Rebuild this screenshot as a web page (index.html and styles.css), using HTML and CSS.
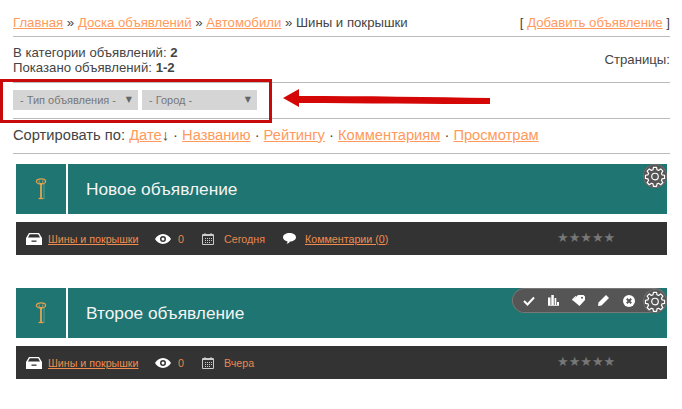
FILE: index.html
```html
<!DOCTYPE html>
<html lang="ru">
<head>
    <meta charset="UTF-8">
    <meta name="viewport" content="width=device-width, initial-scale=1.0">
    <title>Шины и покрышки</title>
    <link rel="stylesheet" href="styles.css">
</head>
<body>
    <svg class="defs" width="0" height="0">
        <symbol id="i-key" viewBox="0 0 12 23">
            <ellipse cx="6" cy="3.400" rx="4.600" ry="2.600" fill="none" stroke="#e0a050" stroke-width="1.300"/>
            <path d="M4.200 2.500v3.500M7.800 2.500v3.500" stroke="#e0a050" stroke-width=".8"/>
            <path d="M6 5v16" stroke="#eaaa58" stroke-width="1.700"/>
            <path d="M3.500 20.500h5" stroke="#e0a050" stroke-width="1.300"/>
            <path d="M9 6v15" stroke="#5f9a85" stroke-width="1"/>
        </symbol>
        <symbol id="i-gear" viewBox="0 0 24 24">
            <path fill="none" stroke="#fff" stroke-width="1.300" stroke-linejoin="round" d="M10.300 2.500h3.400l.5 2.700 1.700.7 2.300-1.600 2.400 2.400-1.600 2.300.7 1.700 2.700.5v3.400l-2.700.5-.7 1.700 1.600 2.300-2.400 2.400-2.300-1.600-1.700.7-.5 2.700h-3.400l-.5-2.700-1.700-.7-2.300 1.600-2.400-2.400 1.600-2.300-.7-1.700-2.700-.5v-3.400l2.700-.5.7-1.700-1.600-2.300 2.400-2.400 2.300 1.600 1.700-.7z"/>
            <circle cx="12" cy="12.600" r="3.600" fill="none" stroke="#fff" stroke-width="1.300"/>
        </symbol>
        <symbol id="i-tray" viewBox="0 0 16 12">
            <path fill="#fff" d="M3 0h10l3 5V12H0V5zM3.800 1.300 2 4.500h12l-1.800-3.200z"/>
            <path fill="#333" d="M5.500 7.500h5v1.300h-5z"/>
        </symbol>
        <symbol id="i-eye" viewBox="0 0 16 10">
            <path fill="#fff" fill-rule="evenodd" d="M8 0c3.500 0 6.300 2.200 8 5-1.700 2.800-4.500 5-8 5S1.700 7.800 0 5c1.700-2.800 4.500-5 8-5zm0 2a3 3 0 1 0 0 6 3 3 0 0 0 0-6z"/>
            <circle cx="8" cy="5" r="1.500" fill="#fff"/>
        </symbol>
        <symbol id="i-cal" viewBox="0 0 12 12">
            <path fill="none" stroke="#ccc" d="M.5 1.500h11v10H.5z"/>
            <path fill="#ccc" d="M1 1h10v2H1zM2.500 0h1v2h-1zM8.500 0h1v2h-1zM3 5h1v1H3zM5 5h1v1H5zM7 5h1v1H7zM9 5h1v1H9zM3 7h1v1H3zM5 7h1v1H5zM7 7h1v1H7zM9 7h1v1H9zM3 9h1v1H3zM5 9h1v1H5zM7 9h1v1H7z"/>
        </symbol>
        <symbol id="i-bubble" viewBox="0 0 13 11">
            <path fill="#fff" d="M6.500 0C10 0 13 1.800 13 4.300S10 8.600 7 8.600c-.5 1-1.800 2-3.500 2.400.6-.7 1-1.600 1-2.600C2 8 0 6.500 0 4.300 0 1.800 3 0 6.500 0z"/>
        </symbol>
        <symbol id="i-check" viewBox="0 0 12 10">
            <path fill="none" stroke="#fff" stroke-width="2" d="M1 5l3.500 3.500L11 1.500"/>
        </symbol>
        <symbol id="i-bars" viewBox="0 0 11 11">
            <path fill="#fff" d="M0 2.500h2.500V10H0zM3.300 0h2.500v10H3.300zM6.600 3h1.700v7H6.600zM9 7h2v3H9zM0 10.300h11v.7H0z"/>
        </symbol>
        <symbol id="i-tag" viewBox="0 0 13 11">
            <path fill="#fff" fill-rule="evenodd" d="M6 0h5.500L13 1.500V5L7.500 11 1 5.500zM10 1.800a1 1 0 1 0 0 2 1 1 0 0 0 0-2z"/>
            <path fill="#fff" d="M3.500 1 0 4.500 1 6l3.500-4.500z"/>
        </symbol>
        <symbol id="i-pencil" viewBox="0 0 11 11">
            <path fill="#fff" d="M8 0l3 3-7.500 7.500L0 11l.5-3.500z"/>
        </symbol>
        <symbol id="i-close" viewBox="0 0 12 12">
            <circle cx="6" cy="6" r="6" fill="#fff"/>
            <path stroke="#555" stroke-width="2" d="M3.800 3.800l4.400 4.400M8.200 3.800 3.800 8.200"/>
        </symbol>
    </svg>

    <div class="page">
        <div class="crumbs">
            <div>
                <a href="#">Главная</a> » <a href="#">Доска объявлений</a> » <a href="#">Автомобили</a> » Шины и покрышки
            </div>
            <div>[ <a href="#">Добавить объявление</a> ]</div>
        </div>

        <div class="info">
            <div>
                В категории объявлений: <b>2</b><br>
                Показано объявлений: <b>1-2</b>
            </div>
            <div class="pages">Страницы:</div>
        </div>

        <div class="filters">
            <div class="select type"><span>- Тип объявления -</span><span class="caret">▼</span></div>
            <div class="select city"><span>- Город -</span><span class="caret">▼</span></div>
        </div>

        <div class="sort">
            Сортировать по: <a href="#">Дате</a>↓ · <a href="#">Названию</a> · <a href="#">Рейтингу</a> · <a href="#">Комментариям</a> · <a href="#">Просмотрам</a>
        </div>

        <div class="ad">
            <div class="ad-head">
                <div class="ad-key"><svg width="12" height="23"><use href="#i-key"/></svg></div>
                <h2 class="ad-title">Новое объявление</h2>
                <div class="tools">
                    <span class="gear"><svg width="22" height="22"><use href="#i-gear"/></svg></span>
                </div>
            </div>
            <div class="ad-meta">
                <svg class="m-tray" width="16" height="12"><use href="#i-tray"/></svg>
                <a href="#" class="m-cat">Шины и покрышки</a>
                <svg class="m-eye" width="16" height="10"><use href="#i-eye"/></svg>
                <span class="m-views">0</span>
                <svg class="m-cal" width="12" height="12"><use href="#i-cal"/></svg>
                <span class="m-date">Сегодня</span>
                <svg class="m-bubble" width="13" height="11"><use href="#i-bubble"/></svg>
                <a href="#" class="m-comments">Комментарии (0)</a>
                <span class="stars">★★★★★</span>
            </div>
        </div>

        <div class="ad">
            <div class="ad-head">
                <div class="ad-key"><svg width="12" height="23"><use href="#i-key"/></svg></div>
                <h2 class="ad-title">Второе объявление</h2>
                <div class="tools open">
                    <span class="tool"><svg width="12" height="10"><use href="#i-check"/></svg></span>
                    <span class="tool"><svg width="11" height="11"><use href="#i-bars"/></svg></span>
                    <span class="tool"><svg width="13" height="11"><use href="#i-tag"/></svg></span>
                    <span class="tool"><svg width="11" height="11"><use href="#i-pencil"/></svg></span>
                    <span class="tool"><svg width="12" height="12"><use href="#i-close"/></svg></span>
                    <span class="gear"><svg width="22" height="22"><use href="#i-gear"/></svg></span>
                </div>
            </div>
            <div class="ad-meta">
                <svg class="m-tray" width="16" height="12"><use href="#i-tray"/></svg>
                <a href="#" class="m-cat">Шины и покрышки</a>
                <svg class="m-eye" width="16" height="10"><use href="#i-eye"/></svg>
                <span class="m-views">0</span>
                <svg class="m-cal" width="12" height="12"><use href="#i-cal"/></svg>
                <span class="m-date">Вчера</span>
                <span class="stars">★★★★★</span>
            </div>
        </div>
    </div>

    <!-- annotation drawn over the screenshot -->
    <div class="note-box"></div>
    <svg class="note-arrow" width="210" height="20" viewBox="0 0 210 20">
        <path fill="#d40606" d="M0 9 16 0V7C80 7 150 8 207 9V15C150 15 80 14.500 16 14V18z"/>
    </svg>
</body>
</html>
```

FILE: styles.css
```css
* {
    box-sizing: border-box;
    margin: 0;
    padding: 0;
}

body {
    background: #fff;
    color: #444;
    font-family: 'Liberation Sans', Arial, sans-serif;
    font-size: 13.2px;
    position: relative;
}

a {
    color: #ff9a5c;
}

.defs {
    position: absolute;
}

.page {
    padding: 0 12px 0 13px;
}

.crumbs {
    display: flex;
    justify-content: space-between;
    height: 37px;
    padding-top: 15px;
    line-height: 15px;
    border-bottom: 1px solid #bbb;
}

.info {
    display: flex;
    justify-content: space-between;
    height: 46px;
    padding-top: 8px;
    line-height: 15px;
    border-bottom: 1px solid #bbb;
}

.pages {
    padding-top: 7px;
}

.filters {
    display: flex;
    gap: 4px;
    height: 36px;
    padding-top: 7px;
    border-bottom: 1px solid #bbb;
}

.select {
    display: flex;
    justify-content: space-between;
    height: 20px;
    padding: 0 6px 0 7px;
    background: #d5d5d5;
    color: #777;
    font-size: 11px;
    line-height: 21px;
}

.select.type {
    width: 125px;
}

.select.city {
    width: 115px;
}

.caret {
    font-family: 'DejaVu Sans', sans-serif;
    font-size: 8px;
    line-height: 19px;
    color: #666;
}

.sort {
    height: 35px;
    padding-top: 8px;
    font-size: 14.700px;
    line-height: 16px;
    border-bottom: 1px solid #bbb;
}

.ad {
    margin: 10px 3px 33px;
}

.ad-head {
    display: flex;
    position: relative;
    height: 50px;
    background: #1f7571;
}

.ad-key {
    display: flex;
    align-items: center;
    justify-content: center;
    width: 52px;
    border-right: 2px solid #fff;
}

.ad-title {
    padding-left: 18px;
    color: #f4f4f4;
    font-size: 17.300px;
    font-weight: normal;
    line-height: 51px;
}

.tools {
    position: absolute;
    top: 0;
    right: 0;
}

.tools.open {
    display: flex;
    align-items: center;
    width: 155px;
    height: 25px;
    padding-left: 4px;
    border-radius: 13px;
    background: #555;
    box-shadow: inset 0 0 0 1px #777;
}

.tool {
    display: flex;
    justify-content: center;
    width: 25px;
}

.tools.open .gear {
    margin-left: auto;
}

.gear {
    display: flex;
    align-items: center;
    justify-content: center;
    width: 24px;
    height: 24px;
    border-radius: 50%;
    background: #555;
    box-shadow: inset 0 0 0 1px #6c6c6c;
}

.ad-meta {
    display: flex;
    align-items: center;
    height: 33px;
    margin-top: 8px;
    padding-left: 10px;
    background: #333;
    color: #e8874f;
    font-size: 10.700px;
}

.ad-meta a {
    color: #ef8d50;
}

.m-cat {
    margin-left: 6px;
    width: 89px;
    white-space: nowrap;
}

.m-eye {
    margin-left: 18px;
}

.m-views {
    margin-left: 7px;
    width: 6px;
}

.m-cal {
    margin-left: 18px;
}

.m-date {
    margin-left: 10px;
}

.m-bubble {
    margin-left: 18px;
}

.m-comments {
    margin-left: 9px;
}

.stars {
    position: absolute;
    left: 557px;
    margin-top: -2px;
    color: #777;
    font-family: 'DejaVu Sans', sans-serif;
    font-size: 13px;
}

/* red annotation */
.note-box {
    position: absolute;
    left: 0;
    top: 79px;
    width: 272px;
    height: 44px;
    border: 3px solid #c80a0a;
}

.note-arrow {
    position: absolute;
    left: 283px;
    top: 89px;
}
```
